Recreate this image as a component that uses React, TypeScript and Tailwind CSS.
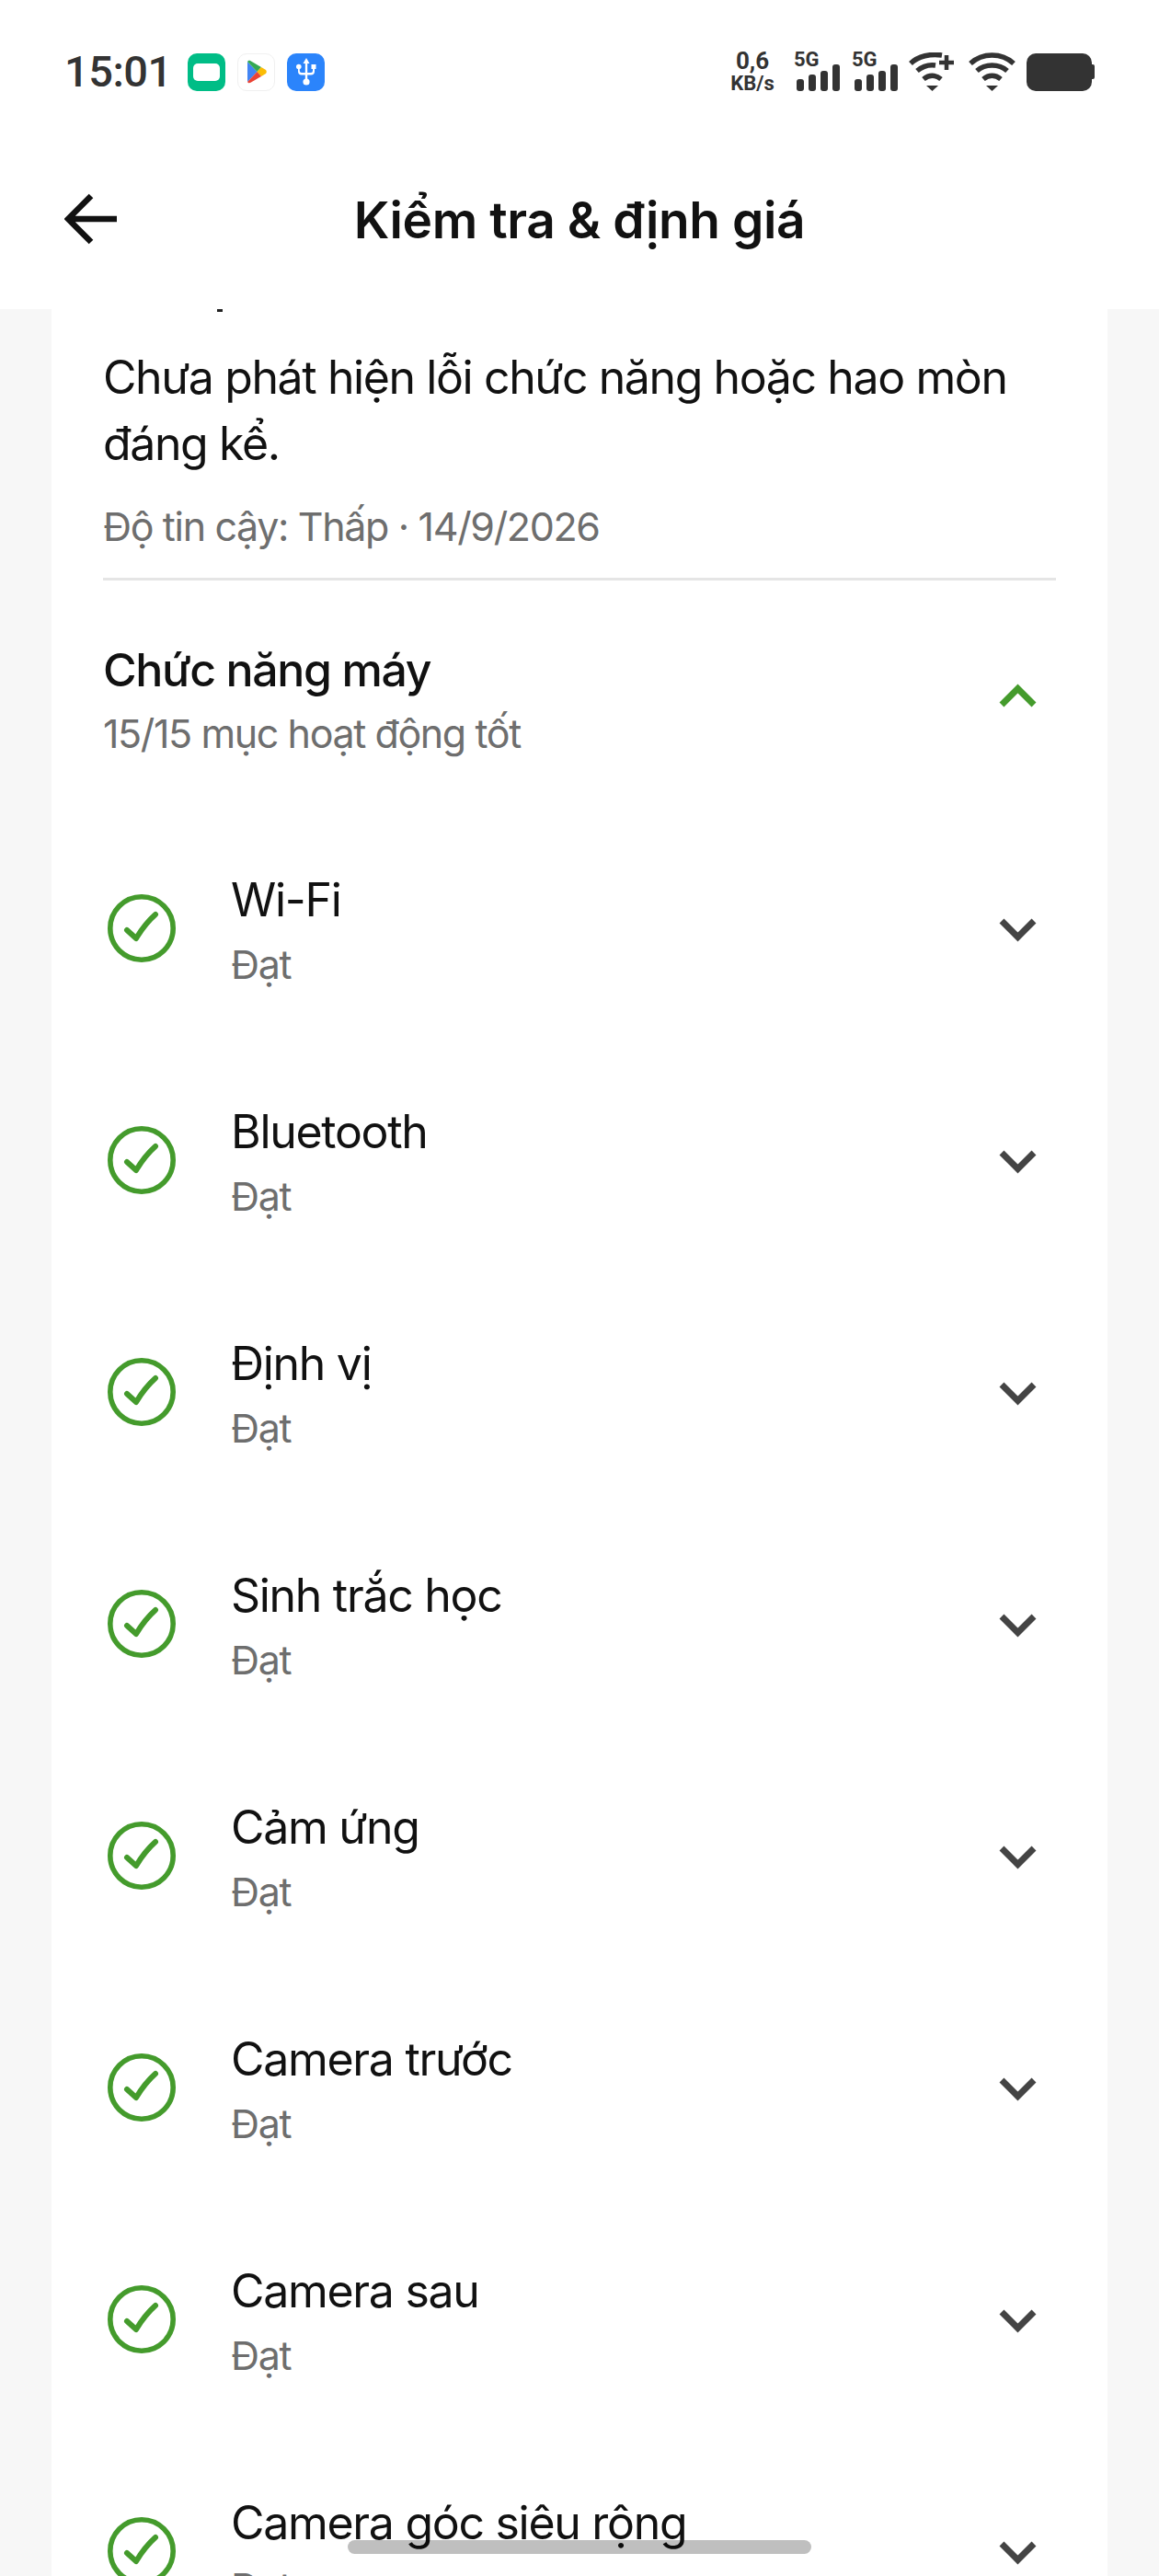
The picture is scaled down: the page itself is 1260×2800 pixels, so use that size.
import React from 'react';

const items = [
  'Wi-Fi',
  'Bluetooth',
  'Định vị',
  'Sinh trắc học',
  'Cảm ứng',
  'Camera trước',
  'Camera sau',
  'Camera góc siêu rộng',
];

function Chevron({ up = false }: { up?: boolean }) {
  return (
    <svg width="41" height="26" viewBox="0 0 41 26" fill="none" className={up ? 'text-[#449b2c]' : 'text-[#444444]'}>
      <polyline
        points={up ? '3,23 20.5,5.5 38,23' : '3,3 20.5,20.5 38,3'}
        stroke="currentColor"
        strokeWidth="7"
      />
    </svg>
  );
}

function CheckCircle() {
  return (
    <svg width="74" height="74" viewBox="0 0 74 74" fill="none" className="shrink-0">
      <circle cx="37" cy="37" r="34.2" stroke="#449b2c" strokeWidth="5.6" />
      <path d="M21 39 L31 48 C37 38 44 29 52 22" stroke="#449b2c" strokeWidth="6" strokeLinecap="round" strokeLinejoin="round" />
    </svg>
  );
}

function Bars() {
  return (
    <div className="flex items-end gap-[5px]">
      <div className="w-[8px] h-[13px] rounded-[3px] bg-[#333333]" />
      <div className="w-[8px] h-[18px] rounded-[3px] bg-[#333333]" />
      <div className="w-[8px] h-[22px] rounded-[3px] bg-[#333333]" />
      <div className="w-[8px] h-[29px] rounded-[3px] bg-[#333333]" />
    </div>
  );
}

function Signal() {
  return (
    <div className="flex flex-col w-[56px] h-[42px] justify-between relative">
      <span className="absolute left-0 top-[-3px] font-['Roboto',sans-serif] font-bold text-[22px] leading-[22px] text-[#333333]">5G</span>
      <div className="absolute left-[3px] bottom-0">
        <Bars />
      </div>
    </div>
  );
}

function Wifi({ plus = false }: { plus?: boolean }) {
  return (
    <svg width="51" height="42" viewBox="0 0 51 42" fill="none" stroke="#333333" strokeWidth="5.5">
      <path d={plus ? 'M2 12 C10 4 24 1 36 3' : 'M2 12 C15 0 36 0 49 12'} />
      <path d={plus ? 'M9 20 C15 15 22 13 29 14' : 'M9 20 C18 12 33 12 42 20'} />
      <path d="M16 29 C22 24 29 24 35 29" />
      <path d="M19 36 H32 L25.5 42 Z" fill="#333333" stroke="none" />
      {plus && <path d="M33 11 H49 M41 3 V19" strokeWidth="4.5" />}
    </svg>
  );
}

function StatusBar() {
  return (
    <div className="flex items-center justify-between h-[42px] mt-[57px] pl-[70px] pr-[70px]">
      <div className="flex items-center">
        <span className="w-[134px] font-['Roboto',sans-serif] font-medium text-[47px] leading-[42px] tracking-[-0.5px] text-[#333333]">15:01</span>
        <div className="flex gap-[13px]">
          <div className="w-[41px] h-[41px] rounded-[10px] bg-[#00bd86] flex items-center justify-center">
            <div className="w-[29px] h-[19px] rounded-[5px] bg-white" />
          </div>
          <div className="w-[41px] h-[41px] rounded-[10px] border border-[#f0f0f0] bg-white flex items-center justify-center">
            <svg width="22" height="26" viewBox="0 0 22 26">
              <path d="M1 2 L11.5 13 L1 24 Z" fill="#4285f4" />
              <path d="M1 2 C2 0.5 3 0.5 4.5 1.2 L16 8 L11.5 13 Z" fill="#34a853" />
              <path d="M16 8 L21 11 C22 12 22 14 21 15 L16 18 L11.5 13 Z" fill="#fbbc04" />
              <path d="M1 24 C2 25.5 3 25.5 4.5 24.8 L16 18 L11.5 13 Z" fill="#ea4335" />
            </svg>
          </div>
          <div className="w-[41px] h-[41px] rounded-[10px] bg-[#2b84fb] flex items-center justify-center">
            <svg width="22" height="30" viewBox="0 0 22 30" fill="white">
              <path d="M11 0 L14.5 6 H7.5 Z" />
              <rect x="9.8" y="5" width="2.4" height="20" />
              <circle cx="11" cy="26" r="3.6" />
              <circle cx="2.8" cy="9.5" r="2.8" />
              <rect x="16.5" y="7" width="5" height="5" />
              <path d="M2 10 H3.8 V14 Q3.8 16 6 16 H16 Q18 16 18 14 V10 H20 V14.5 Q20 18.5 16 18.5 H6 Q2 18.5 2 14.5 Z" />
            </svg>
          </div>
        </div>
      </div>
      <div className="flex items-center">
        <div className="w-[50px] h-[42px] mr-[20px] flex flex-col items-center justify-center font-['Roboto',sans-serif] font-bold text-[#333333]">
          <span className="text-[26px] leading-[26px]">0,6</span>
          <span className="text-[22px] leading-[24px]">KB/s</span>
        </div>
        <div className="flex gap-[7px] mr-[6px]">
          <Signal />
          <Signal />
        </div>
        <div className="mr-[14px]">
          <Wifi plus />
        </div>
        <div className="mr-[12px]">
          <Wifi />
        </div>
        <div className="flex items-center">
          <div className="w-[71px] h-[41px] rounded-[10px] bg-[#333333]" />
          <div className="w-[3px] h-[16px] rounded-r-[2px] bg-[#333333]" />
        </div>
      </div>
    </div>
  );
}

function App() {
  return (
    <div className="relative h-[2800px] overflow-hidden bg-[#f7f7f7] font-['Inter',sans-serif]">
      <header className="h-[336px] bg-white flex flex-col">
        <StatusBar />
        <div className="relative flex items-center justify-center h-[56px] mt-[112px]">
          <svg width="57" height="56" viewBox="0 0 57 56" fill="none" className="absolute left-[70px] top-[-1px]">
            <path d="M57 28 H5 M29 3 L4 28 L29 53" stroke="#111111" strokeWidth="6.5" />
          </svg>
          <h1 className="text-[55px] leading-[56px] font-semibold text-[#111111] tracking-[-0.4px]">Kiểm tra &amp; định giá</h1>
        </div>
      </header>

      <main className="mx-[56px] bg-white">
        <div className="relative px-[56px] pt-[38px]">
          <div className="absolute left-[180px] top-0 w-[6px] h-[3px] bg-[#222222]" />
          <p className="text-[50px] leading-[72px] tracking-[-1.4px] text-[#111111]">Chưa phát hiện lỗi chức năng hoặc hao mòn đáng kể.</p>
          <p className="mt-[28px] text-[43px] leading-[52px] tracking-[-1.35px] text-[#6e6e6e]">Độ tin cậy: Thấp · 14/9/2026</p>
          <div className="mt-[30px] h-[3px] bg-[#e5e5e5]" />
          <div className="flex items-center justify-between pt-[64px]">
            <div>
              <h2 className="text-[50px] leading-[66px] tracking-[-1.4px] font-[450] text-[#111111]">Chức năng máy</h2>
              <p className="text-[43px] leading-[54px] tracking-[-1.4px] mt-[9px] text-[#6e6e6e]">15/15 mục hoạt động tốt</p>
            </div>
            <div className="mr-[21px] -mt-[7px]">
              <Chevron up />
            </div>
          </div>
        </div>
        <ul className="pt-[59px] pl-[61px] pr-[77px]">
          {items.map((name) => (
            <li key={name} className="h-[252px] flex items-center">
              <CheckCircle />
              <div className="ml-[60px] flex-1 pt-[1px]">
                <div className="text-[50px] leading-[66px] tracking-[-1.3px] text-[#111111]">{name}</div>
                <div className="mt-[10px] text-[43px] leading-[54px] tracking-[-1.3px] text-[#6e6e6e]">Đạt</div>
              </div>
              <div className="mt-[3px]">
                <Chevron />
              </div>
            </li>
          ))}
        </ul>
      </main>

      <div className="absolute left-[378px] top-[2761px] w-[504px] h-[15px] rounded-full bg-black/25" />
    </div>
  );
}

export default App;
